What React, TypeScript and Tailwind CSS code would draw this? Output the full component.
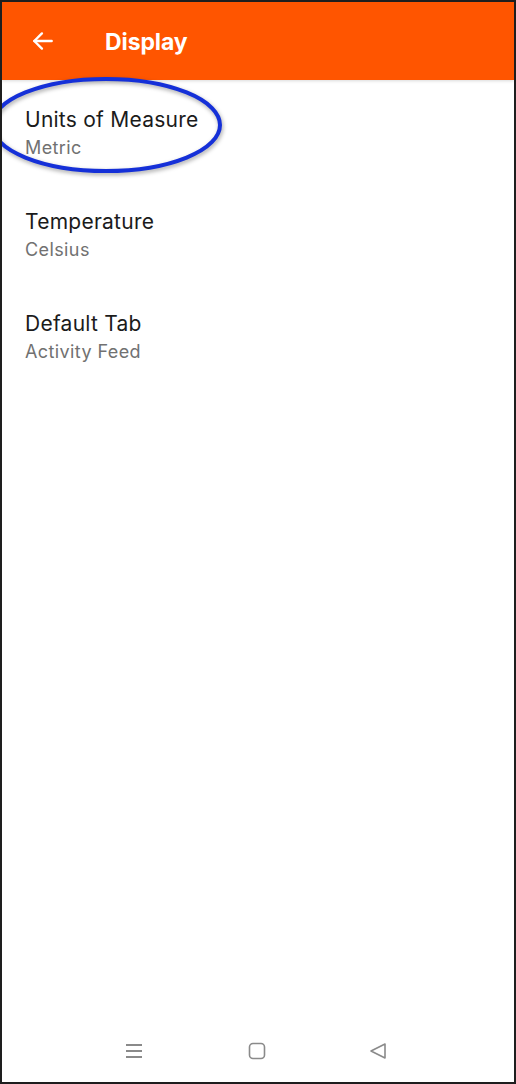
import React from "react";

const items = [
  { title: "Units of Measure", value: "Metric" },
  { title: "Temperature", value: "Celsius" },
  { title: "Default Tab", value: "Activity Feed" },
];

const App = () => {
  return (
    <div
      className="relative w-[516px] h-[1084px] border-2 border-[#1e1e1e] bg-white flex flex-col overflow-hidden"
      style={{ fontFamily: "Inter, 'Noto Sans', sans-serif" }}
    >
      {/* header */}
      <div className="h-[78px] bg-[#ff5500] flex items-center shrink-0 shadow-[0_1px_3px_rgba(0,0,0,0.15)]">
        <svg className="ml-[28px]" width="26" height="26" viewBox="0 0 24 24" fill="none" stroke="white" strokeWidth="2.2" strokeLinecap="round" strokeLinejoin="round">
          <path d="M20 12H4" />
          <path d="M11 5l-7 7 7 7" />
        </svg>
        <h1 className="ml-[49px] mt-[2px] text-white text-[23px] font-bold tracking-[-0.1px] leading-none">Display</h1>
      </div>

      {/* list */}
      <div className="flex flex-col pt-[26px]">
        {items.map((it) => (
          <div key={it.title} className="pl-[23px] h-[102px]">
            <div className="text-[21px] leading-[27px] tracking-[0.25px] text-[#1b1b1b]">{it.title}</div>
            <div className="text-[18px] leading-[24px] tracking-[0.4px] text-[#717171] mt-[3px]">{it.value}</div>
          </div>
        ))}
      </div>

      <div className="flex-1" />

      {/* nav bar */}
      <div className="h-[64px] flex items-start pt-[23px] shrink-0">
        <div className="flex items-center w-full">
          <svg className="ml-[121px]" width="22" height="20" viewBox="0 0 22 20" fill="none" stroke="#8a8a8a" strokeWidth="2">
            <path d="M3 4h16M3 10h16M3 16h16" />
          </svg>
          <svg className="ml-[102px]" width="20" height="20" viewBox="0 0 20 20" fill="none" stroke="#8a8a8a" strokeWidth="1.6">
            <rect x="2.5" y="2.5" width="15" height="15" rx="3.5" />
          </svg>
          <svg className="ml-[101px]" width="20" height="20" viewBox="0 0 20 20" fill="none" stroke="#8a8a8a" strokeWidth="1.6" strokeLinejoin="round">
            <path d="M17 3L3 10l14 7z" />
          </svg>
        </div>
      </div>

      {/* annotation ellipse */}
      <svg className="absolute left-0 top-0 pointer-events-none" width="516" height="200">
        <ellipse cx="104" cy="123" rx="114" ry="46" fill="none" stroke="#1530d8" strokeWidth="4" style={{ filter: "drop-shadow(1px 2px 2px rgba(0,0,0,0.35))" }} />
      </svg>
    </div>
  );
};

export default App;
